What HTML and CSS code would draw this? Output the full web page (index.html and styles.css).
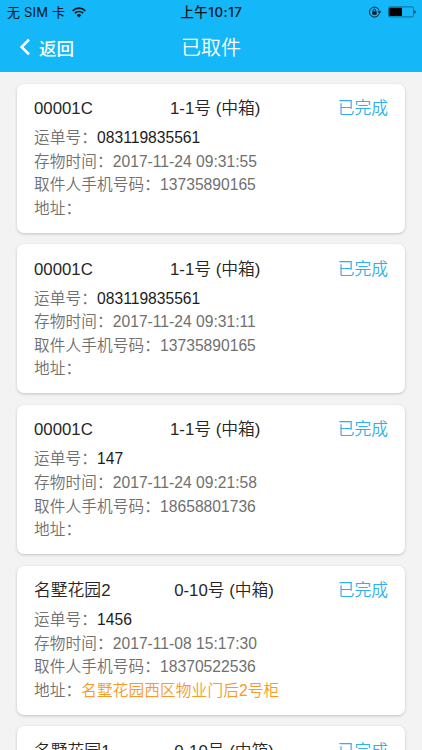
FILE: index.html
```html
<!DOCTYPE html>
<html lang="zh-CN">
<head>
    <meta charset="UTF-8">
    <meta name="viewport" content="width=device-width, initial-scale=1.0">
    <title>已取件</title>
    <link rel="stylesheet" href="styles.css">
</head>
<body>
    <header class="header">
        <div class="status-bar">
            <div class="carrier">
                <span>无 SIM 卡</span>
                <svg class="wifi" viewBox="0 0 14 11" width="14" height="11">
                    <path d="M0.7 3.8a8.9 8.9 0 0 1 12.6 0M2.9 6.2a5.8 5.8 0 0 1 8.2 0" fill="none" stroke="#06151c" stroke-width="1.7"/>
                    <path d="M7 10.6L4.7 8.2a3.2 3.2 0 0 1 4.6 0z" fill="#06151c"/>
                </svg>
            </div>
            <div class="time">上午10:17</div>
            <div class="indicators">
                <svg viewBox="0 0 14 12" width="14" height="12">
                    <path d="M11.2 7.6A5 5 0 1 1 11.2 4.6" fill="none" stroke="#06151c" stroke-width="0.9"/>
                    <path d="M9.4 5.2h4L11.4 7.8z" fill="#06151c"/>
                    <rect x="4.2" y="5.4" width="4.4" height="3.3" fill="#06151c"/>
                    <path d="M5.1 5.6V4.4a1.3 1.3 0 0 1 2.6 0v1.2" fill="none" stroke="#06151c" stroke-width="0.9"/>
                </svg>
                <svg viewBox="0 0 28 12" width="28" height="12">
                    <rect x="0.5" y="0.9" width="25" height="10" rx="1.4" fill="none" stroke="#087094" stroke-width="1"/>
                    <rect x="1.2" y="1.8" width="12.8" height="8.2" rx="0.6" fill="#000"/>
                    <path d="M26.4 4.2a1.9 1.9 0 0 1 0 3.6z" fill="#06303f"/>
                </svg>
            </div>
        </div>
        <nav class="nav">
            <a class="back">
                <svg viewBox="0 0 12 18" width="12" height="18">
                    <path d="M10 1.6L2.6 9l7.4 7.4" fill="none" stroke="#fff" stroke-width="2.6"/>
                </svg>
                <span>返回</span>
            </a>
            <h1 class="title">已取件</h1>
        </nav>
    </header>
    <main class="list">
        <section class="card">
            <div class="card-head"><span>00001C</span><span>1-1号 (中箱)</span><span class="state">已完成</span></div>
            <p><span class="label">运单号：</span><span class="number">083119835561</span></p>
            <p><span class="label">存物时间：</span>2017-11-24 09:31:55</p>
            <p><span class="label">取件人手机号码：</span>13735890165</p>
            <p><span class="label">地址：</span></p>
        </section>
        <section class="card">
            <div class="card-head"><span>00001C</span><span>1-1号 (中箱)</span><span class="state">已完成</span></div>
            <p><span class="label">运单号：</span><span class="number">083119835561</span></p>
            <p><span class="label">存物时间：</span>2017-11-24 09:31:11</p>
            <p><span class="label">取件人手机号码：</span>13735890165</p>
            <p><span class="label">地址：</span></p>
        </section>
        <section class="card">
            <div class="card-head"><span>00001C</span><span>1-1号 (中箱)</span><span class="state">已完成</span></div>
            <p><span class="label">运单号：</span><span class="number">147</span></p>
            <p><span class="label">存物时间：</span>2017-11-24 09:21:58</p>
            <p><span class="label">取件人手机号码：</span>18658801736</p>
            <p><span class="label">地址：</span></p>
        </section>
        <section class="card">
            <div class="card-head"><span>名墅花园2</span><span>0-10号 (中箱)</span><span class="state">已完成</span></div>
            <p><span class="label">运单号：</span><span class="number">1456</span></p>
            <p><span class="label">存物时间：</span>2017-11-08 15:17:30</p>
            <p><span class="label">取件人手机号码：</span>18370522536</p>
            <p><span class="label">地址：</span><span class="address">名墅花园西区物业门后2号柜</span></p>
        </section>
        <section class="card">
            <div class="card-head"><span>名墅花园1</span><span>0-10号 (中箱)</span><span class="state">已完成</span></div>
        </section>
    </main>
</body>
</html>
```

FILE: styles.css
```css
* {
    box-sizing: border-box;
}
body {
    margin: 0;
    height: 750px;
    overflow: hidden;
    display: flex;
    flex-direction: column;
    background-color: #f3f3f4;
    color: #707070;
    font-family: "Liberation Sans", "Noto Sans CJK SC", sans-serif;
    font-weight: 350;
}
.header {
    flex: none;
    height: 72px;
    background-color: #14b7f7;
}
.status-bar {
    display: grid;
    grid-template-columns: 1fr auto 1fr;
    align-items: center;
    height: 24px;
    padding: 0 6px 0 7px;
    color: #06151c;
    font-family: Inter, "Noto Sans CJK SC", sans-serif;
    font-size: 13px;
    font-weight: 400;
    line-height: 24px;
}
.carrier {
    display: flex;
    align-items: center;
    gap: 7px;
    letter-spacing: 0.2px;
}
.time {
    font-size: 13.3px;
    font-weight: 500;
    letter-spacing: 0.6px;
}
.indicators {
    display: flex;
    align-items: center;
    justify-content: flex-end;
    gap: 6px;
}
.nav {
    display: grid;
    grid-template-columns: 1fr auto 1fr;
    align-items: center;
    height: 46px;
    padding: 0 19px;
    color: #fff;
}
.back {
    display: flex;
    align-items: center;
    gap: 8px;
    font-size: 17.5px;
    font-weight: 500;
}
.title {
    margin: 0 0 2px;
    font-size: 20px;
    font-weight: 350;
}
.list {
    display: flex;
    flex-direction: column;
    gap: 11.7px;
    padding: 11.6px 17px 0;
}
.card {
    flex: none;
    height: 149px;
    padding: 12.4px 17px 0;
    border-radius: 7px;
    background-color: #fff;
    box-shadow: 0 1px 3px rgba(0, 0, 0, 0.2);
    font-size: 15.65px;
}
.card-head {
    display: flex;
    justify-content: space-between;
    height: 30px;
    color: #262626;
    font-size: 16.8px;
    line-height: 25px;
}
.card p {
    margin: 0;
    height: 23.6px;
    line-height: 23.6px;
    white-space: nowrap;
}
.label,
.address {
    letter-spacing: 0.12px;
}
.number {
    color: #1c1c1c;
}
.state {
    color: #2fb0ee;
}
.address {
    color: #f79a27;
}
```
